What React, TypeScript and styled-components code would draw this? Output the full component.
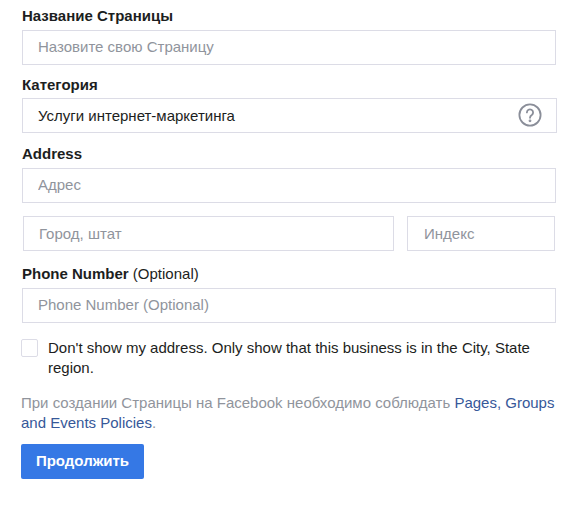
import React from "react";
import styled, { createGlobalStyle } from "styled-components";

const Global = createGlobalStyle`
  html, body { margin: 0; padding: 0; background: #fff; }
  body { font-family: "Liberation Sans", Arial, sans-serif; font-size: 15px; color: #1c1e21; }
`;

const Page = styled.form`
  width: 580px;
  height: 509px;
  box-sizing: border-box;
  padding: 7px 24px 0 22px;
`;

const Label = styled.div<{ $top?: number; $bottom?: number }>`
  height: 18px;
  line-height: 18px;
  font-size: 15px;
  font-weight: 700;
  color: #1c1e21;
  margin-top: ${(p) => p.$top ?? 0}px;
  margin-bottom: ${(p) => p.$bottom ?? 5}px;
  span { font-weight: 400; }
`;

const InputBox = styled.div<{ $wide?: boolean }>`
  position: relative;
  margin-right: ${(p) => (p.$wide ? "-1px" : "0")};
`;

const Input = styled.input<{ $raised?: boolean; $inset?: number }>`
  display: block;
  width: 100%;
  height: 35px;
  box-sizing: border-box;
  padding: 0 15px ${(p) => (p.$raised ? 3 : 1)}px ${(p) => p.$inset ?? 15}px;
  border: 1px solid #dcdce6;
  border-radius: 0;
  outline: none;
  background: #fff;
  font-family: inherit;
  font-size: 15px;
  color: #1c1e21;
  &::placeholder { color: #90949c; opacity: 1; }
`;

const HelpIcon = styled.svg`
  position: absolute;
  right: 15px;
  top: 5px;
  width: 24px;
  height: 24px;
`;

const Row = styled.div`
  display: grid;
  grid-template-columns: 371px 148px;
  column-gap: 13px;
  margin: 13px 1px 0;
`;

const CheckRow = styled.label`
  display: flex;
  align-items: flex-start;
  margin: 15px 0 0 -1px;
  line-height: 20px;
  color: #1c1e21;
`;

const Box = styled.input`
  appearance: none;
  flex: none;
  width: 17px;
  height: 18px;
  box-sizing: border-box;
  margin: 1px 10px 0 0;
  border: 1px solid #dcdce6;
  border-radius: 2px;
  background: #fff;
`;

const Note = styled.p`
  margin: 15px 0 0 -1px;
  line-height: 20px;
  color: #90949c;
`;

const NoteLink = styled.a`
  color: #365899;
  text-decoration: none;
`;

const Submit = styled.button`
  display: block;
  width: 123px;
  height: 35px;
  margin: 11px 0 0 -1px;
  padding: 0 0 2px;
  border: 0;
  border-radius: 2px;
  background: #3578e5;
  color: #fff;
  font-family: inherit;
  font-size: 15px;
  font-weight: 700;
`;

export default function App() {
  return (
    <>
      <Global />
      <Page onSubmit={(e) => e.preventDefault()}>
        <Label>Название Страницы</Label>
        <InputBox>
          <Input $raised placeholder="Назовите свою Страницу" />
        </InputBox>

        <Label $top={11} $bottom={4}>Категория</Label>
        <InputBox $wide>
          <Input defaultValue="Услуги интернет-маркетинга" />
          <HelpIcon viewBox="0 0 24 24" fill="none" stroke="#8a8e99" strokeWidth="1.8" strokeLinecap="round">
            <circle cx="12" cy="12" r="10.6" />
            <path d="M8.9 9.4a3.1 3.1 0 1 1 4.9 2.6c-1.2.8-1.8 1.4-1.8 2.8" />
            <circle cx="12" cy="17.8" r="0.5" fill="#8a8e99" />
          </HelpIcon>
        </InputBox>

        <Label $top={12}>Address</Label>
        <InputBox>
          <Input $raised placeholder="Адрес" />
        </InputBox>

        <Row>
          <Input placeholder="Город, штат" />
          <Input $inset={16} placeholder="Индекс" />
        </Row>

        <Label $top={14}>
          Phone Number <span>(Optional)</span>
        </Label>
        <InputBox>
          <Input $raised placeholder="Phone Number (Optional)" />
        </InputBox>

        <CheckRow>
          <Box type="checkbox" />
          <span>Don't show my address. Only show that this business is in the City, State region.</span>
        </CheckRow>

        <Note>
          При создании Страницы на Facebook необходимо соблюдать <NoteLink href="#">Pages, Groups and Events Policies</NoteLink>.
        </Note>

        <Submit type="submit">Продолжить</Submit>
      </Page>
    </>
  );
}
